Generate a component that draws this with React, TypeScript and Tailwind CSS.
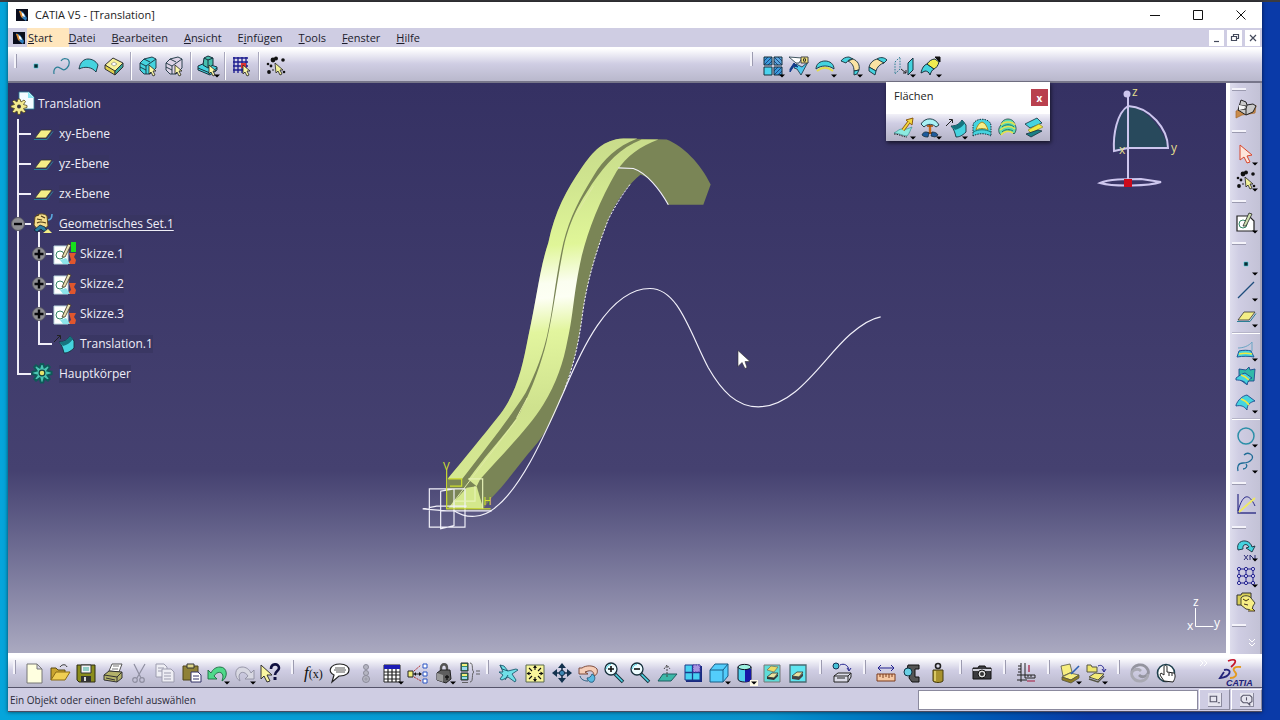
import type { ReactNode } from "react"
import { clsx } from "clsx"

const DARK = "#16303c"
const CYAN = "#45d3df"
const YEL = "#f4ee86"

const pick = <path d="M13 11l0 9 2-2 2 4 2-1-2-4 3 0z" fill="#fbf8a8" stroke="#222" strokeWidth=".8" />
const drop = <path d="M18 20.5h6l-3 3z" fill="#000" />

const lens = (
  <>
    <path d="M13 13l8 8" stroke={DARK} strokeWidth="3.6" />
    <path d="M13.5 13.5l7 7" stroke="#4fd8e8" strokeWidth="1.6" />
    <circle cx="9" cy="8" r="6" fill="#eefcff" stroke={DARK} strokeWidth="1.3" />
    <path d="M4.500 8a4.500 4.500 0 0 1 4.500-4.500" fill="none" stroke="#4fd8e8" />
  </>
)

const dots = (
  <>
    <g fill="#111">
      <circle cx="9" cy="6" r="2.4" />
      <circle cx="12" cy="4.5" r="2" />
      <circle cx="19" cy="6" r="1.8" />
      <circle cx="4" cy="10" r="1.3" />
      <circle cx="7" cy="12" r="1.4" />
      <circle cx="5" cy="18" r="1.9" />
      <circle cx="20" cy="18" r="1.3" />
      <circle cx="9" cy="16" r=".8" />
    </g>
    <path d="M11 9l1 10 2-2 2 4 2-1-2-4 3 0z" fill="#f2f29a" stroke="#222" strokeWidth=".8" />
  </>
)

const cube = (fill: string) => (
  <>
    <path d="M4 9l4-4 8-2 4 2v9l-6 6-6 0-4-4z" fill={fill} stroke={DARK} strokeWidth=".9" />
    <path d="M4 9l6 3 10-7M10 12v8M4 13l6 3M8 5l6 3" fill="none" stroke={DARK} strokeWidth=".9" />
    {pick}
  </>
)

const gear = "M11 3l2 0 1 3 3-2 1.500 1.500-2 3 3.500 1v2l-3.500 1 2 3-1.500 1.500-3-2-1 3.500h-2l-1-3.500-3 2L5.500 15.500l2-3-3.500-1v-2l3.500-1-2-3L7 4l3 2z"

// Every drawing lives on a 24 x 24 grid
const icons: Record<string, ReactNode> = {
  point: <path d="M10 10h4v4h-4z" fill="#0b2c33" stroke={CYAN} strokeWidth=".6" />,
  spline: <path d="M4 20c-1-6 3-8 6-6s4 3 7 0 3-8 0-9-5 0-6 2" fill="none" stroke="#2a7f96" strokeWidth="1.2" />,
  surface: <path d="M3 15c1-7 5-10 9-10s8 2 10 6l-2 7c-4-5-11-6-17-3z" fill={CYAN} stroke={DARK} strokeWidth=".9" />,
  solid: (
    <>
      <path d="M3 11l8-7 10 5-8 9z" fill="#f8f29a" stroke="#333" />
      <path d="M3 11v4l10 6v-4z" fill="#e0cf4c" stroke="#333" />
      <path d="M13 17v4l8-8V9z" fill="#3aa59b" stroke="#333" />
      <path d="M9 10l3-2 3 2-3 2z" fill="#fff" stroke="#777" strokeWidth=".6" />
    </>
  ),
  bodyIn: cube(CYAN),
  bodyOut: cube("#dcd3e6"),
  bodyAll: (
    <>
      <path d="M2 12l7-3 12 4v3l-7 5-12-5z" fill={CYAN} stroke={DARK} />
      <path d="M2 14l12 5 7-5" fill="none" stroke={DARK} />
      <path d="M8 4l4-2 5 2v7l-5 3-5-3z" fill="#46bfae" stroke={DARK} />
      <path d="M8 4l4 2 5-2M12 6v7" fill="none" stroke={DARK} />
      {pick}
    </>
  ),
  grid: (
    <>
      <path d="M4 3v16M8 3v16M12 3v16M16 3v12M3 4h15M3 8h15M3 12h15M3 16h10" fill="none" stroke="#1b1b8e" strokeWidth="1.3" />
      <path d="M11 9h5v5h-5z" fill="#d33" />
      {pick}
    </>
  ),
  stars: dots,
  tiles: (
    <>
      <path d="M3 3h8v8H3zM13 13h8v8h-8z" fill="#3a9bdb" />
      <path d="M13 3h8v8h-8z" fill="#5aa6dd" />
      <path d="M3 13h8v8H3z" fill="#4ad2ee" />
      <path d="M3 7l4-4M3 11l8-8M7 11l4-4M13 3l8 8M17 3l4 4M13 7l4 4M13 17l4-4M13 21l8-8M17 21l4-4" stroke="#1c3b77" strokeWidth=".9" />
      <path d="M3 3h8v8H3zM13 3h8v8h-8zM3 13h8v8H3zM13 13h8v8h-8z" fill="none" stroke={DARK} />
    </>
  ),
  trim0: (
    <>
      <path d="M2 3l13 1-3 5-3 0z" fill="#fff" stroke={DARK} strokeWidth=".8" />
      <path d="M9 10l6 3 6-5-7 13-4-6-3-1z" fill="#4fc8ee" stroke={DARK} strokeWidth=".8" />
      <path d="M7 9l4 4-4-1-4 6v-3z" fill="#123a8a" stroke="#123a8a" />
      <path d="M14 3h7v6h-7z" fill="#f3e27a" stroke="#444" />
      <ellipse cx="17.5" cy="6" rx="1" ry="1.8" fill="none" stroke="#222" />
    </>
  ),
  dome: (
    <>
      <path d="M3 15c0-5 4-8 9-8s9 3 9 8c-5-4-13-4-18 0z" fill={CYAN} stroke={DARK} strokeWidth=".9" />
      <path d="M4 17c5-4 11-4 16 0" fill="none" stroke="#e3dc4a" strokeWidth="1.8" />
    </>
  ),
  filletA: (
    <>
      <path d="M2 7c2-3 5-4 8-4l4 2c-3 0-5 1-7 4z" fill={CYAN} stroke={DARK} strokeWidth=".9" />
      <path d="M9 7l5-2c5 2 7 6 6 11l-5 1c0-5-2-8-6-10z" fill="#fae3a3" stroke={DARK} strokeWidth=".9" />
      <path d="M15 17l5-1-2 4-3 1z" fill={CYAN} stroke={DARK} strokeWidth=".9" />
    </>
  ),
  filletB: (
    <>
      <path d="M11 5c3-2 7-2 10 1l-3 3-3-1z" fill={CYAN} stroke={DARK} strokeWidth=".9" />
      <path d="M3 13c1-4 4-7 8-8l7 4c-4 1-7 4-8 8z" fill="#fae3a3" stroke={DARK} strokeWidth=".9" />
      <path d="M3 13l7 4-1 4-6-4z" fill={CYAN} stroke={DARK} strokeWidth=".9" />
    </>
  ),
  mirror: (
    <>
      <path d="M3 8l5-5v12l-5 5z" fill="none" stroke="#2d7f92" strokeDasharray="1.5 1.2" />
      <path d="M9 15l5 4M14 16v3h-3" fill="none" stroke="#222" />
      <path d="M16 9l5-5v12l-5 5z" fill={CYAN} stroke={DARK} />
    </>
  ),
  extend: (
    <>
      <path d="M3 19c1-5 3-8 6-9l7 5c-2 1-3 3-4 6-1-3-3-4-5-4z" fill={CYAN} stroke={DARK} />
      <path d="M9 10c2-3 5-5 8-5l4 3c-1 4-3 6-5 7z" fill="#f1ec4f" stroke={DARK} />
      <path d="M17 3h5v5z" fill="#111" stroke="#111" />
    </>
  ),
  extrude: (
    <>
      <path d="M2 17c4-2 5-4 8-4 4 1 7-1 10-2-2 3-2 6-5 9-4 0-8-3-13-3z" fill="#8ceae0" stroke="#3c8f92" strokeWidth=".7" />
      <path d="M2 18c5 0 9 3 13 3" fill="none" stroke="#222" strokeDasharray="1.5 1" />
      <path d="M11 14l6-8" stroke="#8a5a12" strokeWidth="3.4" />
      <path d="M14 4l7-2-1 7z" fill="#f6d83c" stroke="#8a5a12" />
      <path d="M11 14l6-8" stroke="#f6d83c" strokeWidth="1.8" />
    </>
  ),
  revolve: (
    <>
      <path d="M3 8c4-7 14-7 18 1l-3 2c-3-3-8-4-12 0z" fill="#a8f0f4" stroke={DARK} strokeWidth=".9" />
      <path d="M12 9v9" stroke="#c86a16" strokeWidth="2.4" />
      <path d="M9 10h6M9 17h6" stroke="#a04a08" strokeWidth="1.4" />
      <path d="M4 19c1-3 4-4 7-2l-1 4c-2 0-4 0-6-2zM14 16c3 0 5 1 6 3l-3 2-4-1z" fill="#1d5a9c" stroke={DARK} strokeWidth=".8" />
    </>
  ),
  translate: (
    <>
      <path d="M7 10c4 0 8-1 11-6l4 5v7c-4 4-7 5-10 5-1-4-2-8-5-11z" fill={CYAN} stroke={DARK} strokeWidth=".9" />
      <path d="M7 10c4 0 8-1 11-6l3 3c-3 4-6 6-10 7z" fill="#16747f" />
      <path d="M2 10l6-6M5 3.5h3.5V7" fill="none" stroke="#222" />
    </>
  ),
  fill: (
    <>
      <path d="M3 20V10c0-9 18-9 18 0v10c-5-3-13-3-18 0z" fill={CYAN} stroke={DARK} strokeDasharray="1.5 1" />
      <path d="M6 14c1-4 3-7 6-8 3 1 5 4 6 8-4-2-8-2-12 0z" fill="#f8ee86" stroke="#a88e22" />
      <path d="M3 16c6-3 12-3 18 0" fill="none" stroke="#1c7777" />
    </>
  ),
  blend: (
    <>
      <path d="M5 9c1-8 13-8 14 0 2 3 1 7-1 9-3-4-9-4-13 1-3-2-3-7 0-10z" fill="#5fdcae" stroke="#244" strokeWidth=".8" />
      <path d="M5 9c3-4 11-4 14 0M4 14c4-4 11-5 15-1M5 19c3-4 8-5 12-2" fill="none" stroke="#e8e24d" strokeWidth="1.6" />
      <path d="M6 11c3-3 9-3 12 0M6 16c3-3 8-3 11-1" fill="none" stroke="#1c7777" />
    </>
  ),
  offset: (
    <>
      <path d="M3 8l12-6 5 5-12 5z" fill={CYAN} stroke={DARK} strokeWidth=".8" />
      <path d="M6 14l11-6 4 3-12 6z" fill="#efe93f" stroke="#9a9634" strokeWidth=".8" />
      <path d="M4 18l12-4 4 1-11 6z" fill="#187f86" stroke={DARK} strokeWidth=".8" />
    </>
  ),
  workbench: (
    <>
      <path d="M2 15l6-2 7 2 7-6-1 8-6 1-7 1-6 3z" fill="#c98b4a" stroke="#a3682e" strokeWidth=".7" />
      <path d="M7 4l5 2 1 3 6-1 3 2-3 6-7 3-8-5z" fill="#c9c9c9" stroke="#222" />
      <path d="M4 14l8-1 1-4M12 13v6M5 9l7 1" fill="none" stroke="#222" />
      <path d="M5 9l6 1-1 3-5 1z" fill="#f4f4f4" />
    </>
  ),
  arrow: <path d="M6 3l0 15 4-3 3 6 3-1-3-6 5-1z" fill="#fde5db" stroke="#d8462c" />,
  sketch: (
    <>
      <path d="M3 6h12l5 5v10H3z" fill="#fff" stroke="#222" strokeWidth="1.2" />
      <circle cx="9" cy="14" r="4" fill="none" stroke="#386" />
      <path d="M9 16l6-13 3 1-6 12z" fill="#cfe0b0" stroke="#222" strokeWidth=".8" />
    </>
  ),
  line: <path d="M4 20L20 4" stroke="#1d4d7c" strokeWidth="1.3" />,
  plane: (
    <>
      <path d="M4 16l6-8h11l-6 8z" fill={YEL} stroke="#333" strokeWidth=".8" />
      <path d="M3 17.500h13l6-8" fill="none" stroke="#2a7f96" />
    </>
  ),
  join: (
    <>
      <path d="M4 10c5 0 11-2 14-6v9H5" fill="none" stroke="#6aa5c4" />
      <path d="M5 13c4-1 9-1 12 0l3 6c-5-1-11-1-17 0z" fill={CYAN} stroke="#1f5b96" />
      <path d="M5 16c4-1 9-1 13 0" fill="none" stroke="#efe93f" strokeWidth="1.6" />
    </>
  ),
  patch: (
    <>
      <path d="M5 5l7 1 3-3 1 3 5-1-1 12-5 0-3 3-7-5z" fill="#2fb9a9" stroke="#1e4a8e" strokeWidth=".9" />
      <path d="M2 14c3-2 5-4 9-5l7 5c-3 1-4 3-5 7-2-4-6-5-11-5z" fill={CYAN} stroke="#1e4a8e" strokeWidth=".9" />
      <path d="M7 11c4 1 6 3 8 5" stroke="#efe93f" strokeWidth="1.6" fill="none" />
    </>
  ),
  split: (
    <>
      <path d="M2 15c2-5 6-9 11-10l8 6c-5 1-8 4-8 9-3-4-6-5-11-4z" fill={CYAN} stroke="#1e4a8e" strokeWidth=".9" />
      <path d="M7 9c3 1 6 3 8 6" stroke="#efe93f" strokeWidth="1.6" fill="none" />
    </>
  ),
  circle: <circle cx="12" cy="12" r="8" fill="none" stroke="#2c8fa8" strokeWidth="1.5" />,
  curve2: <path d="M10 5c4-4 10 0 8 4-2 3-5 4-9 4-5 0-6 4-5 8M12 14c2 2 0 5-3 5" fill="none" stroke="#1f6c96" strokeWidth="1.3" />,
  law: (
    <>
      <path d="M4 2v19h18" fill="none" stroke="#3a3a8c" strokeWidth="1.3" />
      <path d="M4 19C9 1 15 1 21 14" fill="none" stroke="#2a2a8a" />
      <path d="M5 20L21 6" stroke="#f0ea60" strokeWidth="1.8" />
    </>
  ),
  repeat: (
    <>
      <path d="M4 12C1 1 16 0 18 9l3-1-3 6-6-4 3-1c-2-4-7-3-6 2z" fill={CYAN} stroke={DARK} strokeWidth=".9" />
      <path d="M10 17l4 5M14 17l-4 5M16 22v-5l5 5v-5" fill="none" stroke="#2d2d78" />
    </>
  ),
  nodes: (
    <g fill="#dcd8f4" stroke="#23238f">
      <path d="M5 5h14v14H5zM12 5v14M5 12h14" fill="none" />
      {[5, 12, 19].map((y) => [5, 12, 19].map((x) => <circle key={`${x}-${y}`} cx={x} cy={y} r="1.600" />))}
    </g>
  ),
  set: (
    <>
      <path d="M3 5h4l1-2h9v12H3z" fill="#d8cf58" stroke="#333" />
      <path d="M7 8c2-3 8-3 10 0l4 5-2 3-1 4-6-1-5-4z" fill="#f7ee86" stroke="#443" />
      <path d="M9 9l3 2 3-2M10 14l4 1M14 21h7l-3-3" fill="#f0e850" stroke="#432" />
    </>
  ),
  file: <path d="M5 3h10l5 5v14H5zM15 3v5h5" fill="#ffffe0" stroke="#777" />,
  open: (
    <>
      <path d="M3 19V7h5l2 2h7v3" fill="#c9a42f" stroke="#5b4a12" />
      <path d="M3 19l5-8h14l-5 8z" fill="#f0ce52" stroke="#8a6a14" />
      <path d="M12 6c2-3 6-3 7 0" fill="none" stroke="#333" />
    </>
  ),
  save: (
    <>
      <path d="M3 4h18v17H5l-2-2z" fill="#8b8d1c" stroke="#2a2a12" />
      <path d="M7 4h10v8H7z" fill="#f2f2f2" stroke="#333" />
      <path d="M9 7h6M9 9h6" stroke="#3a9" />
      <path d="M7 15h10v6H7z" fill="#333" />
      <path d="M10 16h2v4h-2z" fill="#ddd" />
    </>
  ),
  print: (
    <>
      <path d="M8 10l3-7h10l-3 8z" fill="#fff" stroke="#555" />
      <path d="M12 5h6M11 8h6" stroke="#777" />
      <path d="M3 14l5-4 13 1v6l-5 4-13-2z" fill="#b3b26a" stroke="#333" />
      <path d="M3 14l13 2 5-5M16 16v5M5 17l9 2" fill="none" stroke="#333" />
    </>
  ),
  cut: (
    <g fill="none" stroke="#8e8ea0" strokeWidth="1.2">
      <path d="M7 3l7 14M18 3l-8 14" />
      <circle cx="8" cy="19" r="2.3" />
      <circle cx="15" cy="19" r="2.3" />
    </g>
  ),
  copy: (
    <g fill="#eeeef4" stroke="#9c9cae">
      <path d="M3 3h8l3 3v10H3zM5 7h6M5 10h6" />
      <path d="M9 8h9l3 3v10H9zM11 12h7M11 15h7M11 18h7" />
    </g>
  ),
  paste: (
    <>
      <path d="M4 5h15v14H4z" fill="#8f8137" stroke="#4e451a" />
      <path d="M8 3h7v4H8z" fill="#ddd58a" stroke="#333" />
      <path d="M12 11h7l3 3v7H12z" fill="#fff" stroke="#336" />
      <path d="M14 15h6M14 18h6" stroke="#336" />
    </>
  ),
  undo: <path d="M2 9v9h9l-3-3c3-5 9-5 9 1l-1 4c6-3 6-14-2-14-4 0-7 2-9 6z" fill="#4fd98a" stroke="#1b6b3f" strokeWidth=".9" />,
  redo: <path d="M22 9v9h-9l3-3c-3-5-9-5-9 1l1 4C2 17 2 6 10 6c4 0 7 2 9 6z" fill="#d8d8e2" stroke="#8e8ea0" strokeWidth=".9" />,
  help: (
    <>
      <path d="M3 4v14l3-3 3 6 3-1-3-6h5z" fill="#faf5a0" stroke="#333" />
      <path d="M13 8c0-6 8-6 8-1 0 3-4 3-4 7" fill="none" stroke="#101040" strokeWidth="2.6" />
      <path d="M15.5 16h3v3h-3z" fill="#101040" />
    </>
  ),
  formula: (
    <text x="2" y="17" fontSize="17" fontStyle="italic" fontFamily="Liberation Serif, serif" fill="#111">
      f
      <tspan fontSize="12" fontStyle="normal">
        (x)
      </tspan>
    </text>
  ),
  comment: (
    <>
      <path d="M12 3c12 0 12 12 0 12l-1 0-7 6 2-7C-1 11 2 3 12 3z" fill="#fff" stroke="#222" strokeWidth="1.2" />
      <path d="M7 7h10M6 9h12M8 11h9" stroke="#444" strokeWidth=".9" />
    </>
  ),
  pawn: (
    <g fill="#b5b5c2" stroke="#8c8c9a">
      <circle cx="12" cy="6" r="2.5" />
      <circle cx="12" cy="12" r="2.5" />
      <circle cx="12" cy="18" r="3.5" />
      <circle cx="12" cy="18" r="1" fill="#eee" />
    </g>
  ),
  table: (
    <>
      <path d="M4 4h16v17H4z" fill="#fff" stroke="#222" />
      <path d="M4 4h16v4H4z" fill="#1c1cb4" />
      <path d="M4 11h16M4 14h16M4 18h16M8 8v13M12 8v13M16 8v13" stroke="#222" strokeWidth="1.2" />
    </>
  ),
  relations: (
    <>
      <path d="M2 10h5v6H2z" fill="#f2ee7a" stroke="#222" />
      <path d="M7 13h8" stroke="#222" />
      <path d="M8 10l7-6M8 16l7 4" stroke="#b02a2a" strokeDasharray="2 1" />
      <path d="M10 11v4l-2-2zM13 11l3 2-3 2z" fill="#111" />
      <path d="M17 3h4v4h-4zM17 11h4v4h-4zM17 18h4v4h-4z" fill="#fff" stroke="#2b55c4" />
    </>
  ),
  lock: (
    <>
      <path d="M9 10V7c0-5 6-5 6 0v4" fill="none" stroke="#555" strokeWidth="2.400" />
      <path d="M5 12l4-3h9l1 9-5 4-9-3z" fill="#5e5e5e" stroke="#222" />
      <path d="M5 12l6 2v7l-6-2z" fill="#9a9a9a" />
      <path d="M15 14v5M13 16h4" stroke="#111" strokeWidth="1.3" />
    </>
  ),
  equiv: (
    <>
      <path d="M3 2h7v8H3zM3 12h7v7H3z" fill="#2f8f6c" stroke="#333" />
      <path d="M4 3h5v2H4zM4 13h5v2H4z" fill="#f3ec7a" />
      <path d="M4 6h5v3H4zM4 16h5v2H4z" fill="#9ad8ee" />
      <path d="M12 2c4 0 1 8 4 9-3 1 0 10-4 10M18 10h4M18 13h4M4 21.5h6" fill="none" stroke="#555" strokeWidth=".9" />
    </>
  ),
  fly: (
    <>
      <path d="M3 4l4 1 4 5 8-2 2 1-6 4 4 6-1 2-7-5-6 3-2-1 3-4-4-3 4 0z" fill="#6fe0e8" stroke="#1e5c70" strokeWidth=".9" />
      <path d="M3 4l2 4 6 2M11 14l-3 5" fill="none" stroke="#1e5c70" />
    </>
  ),
  fit: (
    <>
      <path d="M3 4h18v17H3z" fill="#f9f69a" stroke="#5a6a50" />
      <path d="M12 5v4M12 16v4M4 12.5h4M16 12.5h4M6 7l3 3M18 7l-3 3M6 18l3-3M18 18l-3-3" fill="none" stroke="#111" strokeWidth="1.1" />
      <path d="M12 4l-2 3h4zM12 21l-2-3h4zM3.5 12.5l3-2v4zM20.500 12.500l-3-2v4z" fill="#111" />
    </>
  ),
  pan: (
    <>
      <path d="M12 4v16M4 12h16" stroke="#14324e" strokeWidth="1.6" />
      <path d="M12 2l-4 5h8zM12 22l-4-5h8zM2 12l5-4v8zM22 12l-5-4v8z" fill="#14324e" />
      <circle cx="12" cy="12" r="2.6" fill="#3d86b4" stroke="#14324e" />
    </>
  ),
  rotate: (
    <>
      <path d="M3 7h3c4-3 12-3 15 1 1 3 0 6-3 7 0-4-2-6-6-5l-3 1 3 2-7 0-2 0z" fill="#f5cdb8" stroke="#73402f" strokeWidth=".9" />
      <path d="M11 17c2 0 4-1 5-4 3 1 4 5 1 8-3 1-5-1-6-4z" fill="#59b9e0" stroke="#245b7d" strokeWidth=".9" />
      <path d="M4 15c1 4 5 5 8 5" fill="none" stroke="#245b7d" />
    </>
  ),
  zoomIn: (
    <>
      {lens}
      <path d="M6 8h6M9 5v6" stroke="#111" strokeWidth="1.6" />
    </>
  ),
  zoomOut: (
    <>
      {lens}
      <path d="M6 8h6" stroke="#111" strokeWidth="1.6" />
    </>
  ),
  normal: (
    <>
      <path d="M3 20l5-7h14l-6 7z" fill="#3cb8a8" stroke="#1e5c60" />
      <path d="M12 16V5M9 8l3-4 3 4" fill="none" stroke="#444" strokeDasharray="2 1" />
    </>
  ),
  multi: (
    <>
      <path d="M5 5h16v16H5z" fill="#1a2a80" />
      <path d="M4 4h15v15H4z" fill="#48d2f2" stroke="#1a3a8a" />
      <path d="M11.5 4v15M4 11.5h15" stroke="#1a3a8a" strokeWidth="1.3" />
      <path d="M12 4h7v7h-7z" fill="#a895e0" stroke="#5033a8" strokeDasharray="1.5 1" />
    </>
  ),
  iso: (
    <>
      <path d="M3 9l5-6h13v12l-5 6H3z" fill="#53cdfb" stroke="#185d86" />
      <path d="M3 9h13v12M16 9l5-6" fill="none" stroke="#185d86" />
    </>
  ),
  shading: (
    <>
      <path d="M5 6v12c0 4 13 4 13 0V6z" fill="#4fd0ee" stroke="#112" />
      <path d="M12 8h6v10c0 2-3 3-6 3z" fill="#1717a8" />
      <ellipse cx="11.5" cy="6" rx="6.5" ry="2.6" fill="#9cf0e0" stroke="#112" />
      <path d="M17 19h8v6h-8z" fill="#fffbe8" />
    </>
  ),
  showHide: (
    <>
      <path d="M4 4h16v17H4z" fill="#5fdcd8" stroke="#777" />
      <path d="M7 9l4-4 7 1-4 5z" fill="#e9dc66" stroke="#776" strokeWidth=".8" />
      <path d="M7 16l5-4h6l-4 5z" fill="#e8e2a0" stroke="#333" strokeWidth=".8" />
      <path d="M7 16l7 1 4-4v2l-4 4-7-1z" fill="#333" />
    </>
  ),
  swap: (
    <>
      <path d="M4 4h16v17H4z" fill="#5fe6f0" stroke="#4a6a70" strokeWidth="1.3" />
      <path d="M6 15l5-4h6l-4 5z" fill="#e8e2a0" stroke="#333" strokeWidth=".8" />
      <path d="M6 15l7 1 4-4v3l-4 4-7-1z" fill="#444" />
    </>
  ),
  turntable: (
    <>
      <circle cx="6" cy="5" r="3" fill="#46c2d6" stroke="#135" />
      <path d="M10 4c4-2 8 0 9 5M17 7l2 3 2-3" fill="none" stroke="#23238f" />
      <path d="M4 15l4-3h13v4l-3 5H4zM4 15h14v6M18 15l3-3M7 17h8" fill="#dcdce8" stroke="#222" />
    </>
  ),
  measure: (
    <>
      <path d="M4 7h16M7 4L4 7l3 3M17 4l3 3-3 3" fill="none" stroke="#23238f" />
      <path d="M3 13h18v7H3z" fill="#f6c9a4" stroke="#7a3b1d" />
      <path d="M6 13v3M9 13v4M12 13v3M15 13v4M18 13v3" stroke="#7a3b1d" />
    </>
  ),
  clamp: (
    <>
      <path d="M8 4h11v4h-4v8h4v5h-7l-3-4 2-9H7z" fill="#555" stroke="#111" />
      <circle cx="8" cy="11" r="4" fill="#69cfe4" stroke="#134" />
    </>
  ),
  weight: (
    <>
      <circle cx="12" cy="5" r="2.5" fill="none" stroke="#222" strokeWidth="1.6" />
      <path d="M7 9h10v11c-2 2-8 2-10 0z" fill="#a8922e" stroke="#443a0e" />
      <path d="M9 10v10" stroke="#d9c865" strokeWidth="2" />
    </>
  ),
  camera: (
    <>
      <path d="M3 7h5l1-2h6l1 2h5v11H3z" fill="#3a3a3e" stroke="#111" />
      <path d="M3 8h18v2H3z" fill="#cfcfd8" />
      <circle cx="12" cy="13" r="4" fill="#ddd" stroke="#111" />
      <circle cx="12" cy="13" r="2" fill="#333" />
    </>
  ),
  ruler: (
    <>
      <path d="M7 2v19M11 2v12M3 14h18M3 19h10M4 5h3M4 8h3M4 11h3" stroke="#222" />
      <path d="M15 4v7M13 20h8" stroke="#a3163a" strokeWidth="1.2" />
      <path d="M11 14v3h10v-3M14 14v2M17 14v2" fill="none" stroke="#222" />
    </>
  ),
  catalog: (
    <>
      <path d="M3 5l9-2 2 8-9 4z" fill="#f7ee80" stroke="#554" strokeWidth=".8" />
      <path d="M4 16l8-4 9 2-8 5z" fill="#f7ee80" stroke="#554" strokeWidth=".8" />
      <path d="M4 16v3l9 3 8-5v-3l-8 5z" fill="#8f7d24" stroke="#554" strokeWidth=".8" />
      <path d="M21 5l-8 8" stroke="#2c5fb0" strokeWidth="1.6" />
    </>
  ),
  catalogOpen: (
    <>
      <path d="M3 4h4l1 2h5v5H3z" fill="#efe66e" stroke="#554" />
      <path d="M14 5c4-2 6 1 6 5M18 8l2 3 2-3" fill="none" stroke="#23238f" />
      <path d="M5 16l6-4 9 1-6 6z" fill="#f3e978" stroke="#554" />
      <path d="M5 18l9 3 6-6" fill="none" stroke="#554" strokeWidth="1.5" />
    </>
  ),
  update: (
    <g fill="none" strokeWidth="2.800">
      <path d="M4 11C4 3 16 1 20 9c2 5-5 9-9 5" stroke="#94949f" />
      <path d="M20 13c0 8-12 10-16 2-2-5 5-9 9-5" stroke="#a9a9b3" />
    </g>
  ),
  hand: (
    <>
      <circle cx="12" cy="12" r="8.5" fill="#fff" stroke="#1d3f4c" strokeWidth="1.6" />
      <path d="M10 20l-4-6 1-2 3 2V6c0-2 3-2 3 0v5l7 1c2 2 1 6-1 9z" fill="#fff" stroke="#222" />
      <path d="M15 12v3M18 12v3" stroke="#222" />
    </>
  ),
  part: (
    <>
      <path d="M9 0h10l5 5v12H9z" fill="#f4fbff" stroke="#2a7f96" strokeWidth=".8" />
      <path d="M18 0l6 6h-6z" fill="#8ce6f2" />
      <g transform="translate(-3 4)">
        <path d={gear} fill="#f2e98e" stroke="#554a1e" strokeWidth=".8" />
        <circle cx="12" cy="10.5" r="2" fill="#39343f" />
      </g>
    </>
  ),
  geoSet: (
    <>
      <path d="M8 20v9" stroke="#f0eef8" strokeWidth="2" />
      <path d="M4 5c3-4 9-4 12-1l1 10-4 3-7 0-3-4z" fill="#f4dc8c" stroke="#604c20" />
      <path d="M6 7l5 1M10 4l4 2M6 11c3-2 6-1 9 0M5 4l3-1" fill="none" stroke="#4c3a14" strokeWidth="1.2" />
      <path d="M3 18l6-5 5 2 2 4-4 0-2-2-4 3z" fill="#2a7ea0" stroke="#123" strokeWidth=".8" />
      <path d="M12 21h9l-4-4z" fill={YEL} />
      <path d="M17 8c3 0 4-2 4-6" fill="none" stroke="#5aa9de" strokeWidth="1.6" />
    </>
  ),
  sketchNode: (
    <>
      <path d="M2 4h14v18H2z" fill="#fff" stroke="#bcd8df" />
      <path d="M17 11h7l-2 4 2 3-1 4h-8l4-4z" fill="#e0562d" />
      <path d="M8 18l6-2 4 6h-7z" fill="#8be4ea" />
      <circle cx="8" cy="13" r="4" fill="none" stroke="#386" />
      <path d="M10 15l6-13 3 1-6 12z" fill="#e6e0b0" stroke="#432" strokeWidth=".8" />
    </>
  ),
  body: (
    <>
      <g transform="translate(-3.4 -1.600) scale(1.200)">
        <path d={gear} fill="#4cc7b4" stroke="#0f5a58" strokeWidth="1.6" />
        <circle cx="12" cy="10.500" r="2.400" fill="#e8e26b" stroke="#123f3d" />
      </g>
    </>
  ),
}

function Glyph({ name, menu = false }: { name: string; menu?: boolean }) {
  return (
    <svg viewBox="0 0 24 24" className="size-6 shrink-0 overflow-visible" aria-hidden="true">
      {icons[name]}
      {menu && drop}
    </svg>
  )
}

// [icon, label, has flyout]
type Tool = [string, string, boolean?]

function ToolButton({ tool }: { tool: Tool }) {
  return (
    <button type="button" aria-label={tool[1]} title={tool[1]} className="flex size-[26px] shrink-0 items-center justify-center">
      <Glyph name={tool[0]} menu={tool[2]} />
    </button>
  )
}

function Tools({ tools, className }: { tools: Tool[]; className?: string }) {
  return (
    <div className={clsx("flex shrink-0 items-center justify-between", className)}>
      {tools.map((tool) => (
        <ToolButton key={tool[1]} tool={tool} />
      ))}
    </div>
  )
}

function Grip({ className = "w-[18px]" }: { className?: string }) {
  return (
    <div className={clsx("flex shrink-0 justify-center self-start pt-[2px]", className)}>
      <div className="h-[14px] w-[3px] border-r border-[#9c9bb0] bg-[#f4f3fa]" />
    </div>
  )
}

function SideGrip({ className }: { className: string }) {
  return (
    <div className={clsx("flex w-full shrink-0 items-center", className)}>
      <div className="h-[3px] w-[14px] border-b border-[#9c9bb0] bg-[#f4f3fa]" />
    </div>
  )
}

const Divider = () => <div className="mx-[3px] h-[28px] w-[2px] shrink-0 border-r border-white bg-[#a9a8bd]" />
const SideDivider = () => <div className="my-[3px] h-[2px] w-full shrink-0 border-b border-white bg-[#b5b4c8]" />

const menus = ["Datei", "Bearbeiten", "Ansicht", "Einfügen", "Tools", "Fenster", "Hilfe"]

const barBottom: { tools: Tool[]; className?: string }[] = [
  {
    className: "w-[262px]",
    tools: [
      ["file", "Neu"],
      ["open", "Öffnen"],
      ["save", "Sichern"],
      ["print", "Drucken"],
      ["cut", "Ausschneiden"],
      ["copy", "Kopieren"],
      ["paste", "Einfügen"],
      ["undo", "Widerrufen", true],
      ["redo", "Wiederherstellen", true],
      ["help", "Direkthilfe"],
    ],
  },
  {
    className: "w-[177px]",
    tools: [
      ["formula", "Formel"],
      ["comment", "Kommentar"],
      ["pawn", "Regel"],
      ["table", "Konstruktionstabelle", true],
      ["relations", "Beziehungen"],
      ["lock", "Sperren", true],
      ["equiv", "Äquivalente Dimensionen"],
    ],
  },
  {
    className: "w-[315px]",
    tools: [
      ["fly", "Flugmodus"],
      ["fit", "Alles einpassen"],
      ["pan", "Schwenken"],
      ["rotate", "Drehen"],
      ["zoomIn", "Vergrößern"],
      ["zoomOut", "Verkleinern"],
      ["normal", "Senkrechte Ansicht"],
      ["multi", "Mehrfachansicht"],
      ["iso", "Isometrische Ansicht", true],
      ["shading", "Schattierung", true],
      ["showHide", "Verdecken/Anzeigen"],
      ["swap", "Sichtbaren Raum umschalten"],
    ],
  },
  { tools: [["turntable", "Drehtisch"]] },
  {
    tools: [
      ["measure", "Messen zwischen"],
      ["clamp", "Element messen"],
      ["weight", "Trägheit messen"],
    ],
  },
  { tools: [["camera", "Aufnehmen"]] },
  { tools: [["ruler", "Bemaßung"]] },
  {
    tools: [
      ["catalog", "Material zuordnen", true],
      ["catalogOpen", "Katalog", true],
    ],
  },
  {
    tools: [
      ["update", "Aktualisieren"],
      ["hand", "Manuelle Aktualisierung"],
    ],
  },
]

const palette: Tool[] = [
  ["extrude", "Extrudieren", true],
  ["revolve", "Rotation", true],
  ["translate", "Translation", true],
  ["fill", "Füllen"],
  ["blend", "Übergang"],
  ["offset", "Offset"],
]

// branch: lines left of the icon, one cell per level
type Branch = "pass" | "tee" | "end" | "plus" | "minus"
type TreeNode = { label: string; icon: string; branch: Branch[]; lit?: boolean }

const tree: TreeNode[] = [
  { label: "Translation", icon: "part", branch: [] },
  { label: "xy-Ebene", icon: "plane", branch: ["tee"] },
  { label: "yz-Ebene", icon: "plane", branch: ["tee"] },
  { label: "zx-Ebene", icon: "plane", branch: ["tee"] },
  { label: "Geometrisches Set.1", icon: "geoSet", branch: ["minus"] },
  { label: "Skizze.1", icon: "sketchNode", branch: ["pass", "plus"], lit: true },
  { label: "Skizze.2", icon: "sketchNode", branch: ["pass", "plus"] },
  { label: "Skizze.3", icon: "sketchNode", branch: ["pass", "plus"] },
  { label: "Translation.1", icon: "translate", branch: ["pass", "end"] },
  { label: "Hauptkörper", icon: "body", branch: ["end"] },
]

function BranchCell({ kind }: { kind: Branch }) {
  return (
    <svg viewBox="0 0 21 30" className="h-[30px] w-[21px] shrink-0 overflow-visible" aria-hidden="true">
      <path d={kind === "end" ? "M10 0v15" : "M10 0v30"} stroke="#f0eef8" strokeWidth="2" />
      {kind !== "pass" && <path d="M9 15h14" stroke="#f0eef8" strokeWidth="2" />}
      {(kind === "plus" || kind === "minus") && (
        <>
          <circle cx="10" cy="15" r="6.5" fill="#8e8e92" stroke="#5c5c66" />
          <path d={kind === "plus" ? "M5.5 15h9M10 10.5v9" : "M6 15h8"} stroke="#08080c" strokeWidth="2.4" />
        </>
      )}
    </svg>
  )
}

function SpecTree() {
  return (
    <ul className="relative w-fit pt-[6px] text-[12px] leading-[18px] text-[#efedf8]">
      {tree.map((node) => (
        <li key={node.label} className="flex h-[30px] items-center">
          {node.branch.map((kind, i) => (
            <BranchCell key={i} kind={kind} />
          ))}
          <span className="relative ml-[2px] flex">
            <Glyph name={node.icon} />
            {node.lit && <span className="absolute top-0 right-0 h-[10px] w-[5px] bg-[#16e01c]" />}
          </span>
          <span className={clsx("ml-1", node.icon === "geoSet" && "underline underline-offset-2", node.branch.length > 0 && "bg-[#38355f]/70")}>
            {node.label}
          </span>
        </li>
      ))}
    </ul>
  )
}

function Model() {
  return (
    <svg viewBox="8 83 1218 571" preserveAspectRatio="xMidYMid slice" className="absolute inset-0 size-full" aria-hidden="true">
      <defs>
        <linearGradient id="sheen" gradientUnits="userSpaceOnUse" x1="0" y1="57" x2="90" y2="1168">
          <stop offset="0" stopColor="#c6d889" />
          <stop offset=".15" stopColor="#cfe48f" />
          <stop offset=".32" stopColor="#e0f698" />
          <stop offset=".42" stopColor="#fbfef0" />
          <stop offset=".46" stopColor="#fdfff4" />
          <stop offset=".55" stopColor="#e2f59e" />
          <stop offset=".75" stopColor="#cfe28e" />
          <stop offset="1" stopColor="#d8ea94" />
        </linearGradient>
      </defs>
      <g transform="translate(400 120) scale(.33333)">
        <path
          d="M143 1078C200 1010 240 960 300 885C350 820 368 740 385 650C410 540 418 450 445 370C465 275 500 210 545 145C580 95 610 60 670 57L800 60C850 80 900 130 932 195L910 256L805 256C780 210 760 180 722 165C690 190 650 240 625 300C590 390 562 480 548 580C535 680 520 740 490 820C460 900 435 945 400 985C360 1030 320 1090 275 1135L250 1168H140Z"
          fill="#7a8556"
        />
        <path
          d="M143 1078C200 1010 240 960 300 885C350 820 368 740 385 650C410 540 418 450 445 370C465 275 500 210 545 145C580 95 610 60 670 57L712 57C650 80 610 120 580 170C540 235 510 290 490 370C467 470 460 560 447 620C432 700 407 760 377 820C330 895 270 970 187 1078Z"
          fill="url(#sheen)"
        />
        <path
          d="M775 60C720 80 680 110 650 155C600 240 565 330 545 410C520 520 520 590 503 660C490 730 470 790 430 855C390 920 330 980 240 1080L230 1100L205 1080C270 990 330 930 360 880C400 800 424 730 439 670C464 560 474 460 494 370C515 290 540 250 575 195C620 130 660 85 725 60Z"
          fill="url(#sheen)"
        />
        <path d="M155 1155L350 900M350 895L382 835M528 285L580 200" stroke="#dfeaa6" strokeWidth="3" />
        <path d="M145 1165L200 1105L230 1100L250 1168Z" fill="#d4e88c" />
        <g fill="none" stroke="#f2f1fa" strokeWidth="3.5">
          <path d="M655 145L700 147C740 160 780 210 805 256" />
          <path d="M690 195C660 235 640 270 625 300C590 390 562 480 548 580C535 680 520 740 490 820" strokeDasharray="7 4" strokeWidth="3" />
          <path d="M160 1172C200 1200 250 1195 285 1165C370 1100 440 930 490 820C540 700 625 507 750 507C835 507 870 640 925 745C965 815 1010 862 1075 862C1190 862 1270 715 1350 645C1390 610 1420 596 1442 592" />
          <path d="M88 1108H195V1223H88ZM122 1115L162 1108V1218L122 1228ZM68 1168L110 1160H200M68 1168L140 1174H275" />
          <path d="M205 1078H248V1168M225 1100V1145H160" stroke="#e8f3b8" />
        </g>
        <path d="M140 1050V1168H272M145 1078H185V1100H150" fill="none" stroke="#cfe02e" strokeWidth="3.5" />
        <g fill="#d6e02c" fontFamily="Open Sans, sans-serif" fontSize="34">
          <text x="129" y="1052">
            V
          </text>
          <text x="250" y="1158">
            H
          </text>
        </g>
      </g>
      <path d="M738 351v16l4-4 3 6 2-1-2-6h5z" fill="#fff" stroke="#333" strokeWidth=".6" />
    </svg>
  )
}

function Compass() {
  return (
    <svg viewBox="0 -6 84 110" className="absolute -top-[2px] right-[45px] h-[110px] w-[84px]" aria-hidden="true">
      <path d="M31 19C48 20 67 42 71 61L31 62Z" fill="#28495c" />
      <path d="M31 19C22 25 16 50 18 65L31 61Z" fill="#2b4761" />
      <g fill="none" stroke="#cdc6ee" strokeWidth="2">
        <path d="M31 19C53 20 71 42 71 61H31L17 64C16 47 20 26 31 19Z" />
        <path d="M31 8V94" />
        <path d="M3 96C12 92 28 92 44 92L64 95C52 99 18 100 3 96Z" />
      </g>
      <circle cx="30" cy="7" r="3.5" fill="#cdc6ee" />
      <path d="M27 92h8v8h-8z" fill="#cc0a1c" />
      <g fill="#e3de8d" fontFamily="Open Sans, sans-serif" fontSize="12">
        <text x="35" y="9">
          z
        </text>
        <text x="74" y="65">
          y
        </text>
        <text x="22" y="67">
          x
        </text>
      </g>
    </svg>
  )
}

function Triad() {
  return (
    <svg viewBox="0 -8 36 48" className="absolute right-[4px] bottom-[14px] h-[48px] w-[36px]" aria-hidden="true">
      <path d="M9.5 9v18.500h18" fill="none" stroke="#fff" />
      <g fill="#fff" fontFamily="Open Sans, sans-serif" fontSize="12">
        <text x="7" y="7">
          z
        </text>
        <text x="28" y="28">
          y
        </text>
        <text x="1" y="31">
          x
        </text>
      </g>
    </svg>
  )
}

function SurfacePalette() {
  return (
    <section className="absolute -top-px right-[176px] w-[164px] shadow-[1px_2px_4px_rgba(0,0,0,0.6)]">
      <header className="flex h-[32px] items-start justify-between bg-white pt-[7px] pr-[2px] pl-2">
        <h2 className="text-[11px] leading-[14px] text-[#222]">Flächen</h2>
        <button type="button" aria-label="Schließen" className="flex size-[17px] items-center justify-center bg-[#b9404e] text-[10px] leading-4 font-bold text-white">
          x
        </button>
      </header>
      <Tools tools={palette} className="h-[27px] bg-linear-to-b from-[#f2f1f8] via-[#cfcde3] via-35% to-[#b4b3c6] px-[5px]" />
    </section>
  )
}

function AppMark() {
  return (
    <svg viewBox="0 0 14 14" className="size-[14px] shrink-0" aria-hidden="true">
      <path d="M1 1h12v12H1z" fill="#0a0d1c" />
      <path d="M4 2l4 2 4 6-1 3-4-3z" fill="#2f7fc0" />
      <path d="M6 4l3 2 1 3-3-1z" fill="#fff" />
      <path d="M4 3l2 0 2 7-2-1z" fill="#e08a2e" />
    </svg>
  )
}

function CatiaLogo() {
  return (
    <svg viewBox="0 0 42 32" className="h-8 w-[42px] shrink-0" aria-hidden="true">
      <path d="M12 4c8-3 10 0 3 6" fill="none" stroke="#c4162a" strokeWidth="1.8" />
      <path d="M8 13c9-2 7 7-4 8l4-6" fill="none" stroke="#23237a" strokeWidth="1.8" />
      <path d="M25 10c-7-1-9 2-6 5s0 6-5 6" fill="none" stroke="#e39a1e" strokeWidth="1.8" />
      <text x="10" y="29" fontSize="9" fontWeight="bold" fontStyle="italic" fontFamily="Liberation Sans, sans-serif" fill="#23237a">
        CATIA
      </text>
    </svg>
  )
}

function TitleBar() {
  return (
    <header className="flex h-[26px] shrink-0 items-center bg-white pl-[7px]">
      <AppMark />
      <h1 className="ml-[6px] flex-1 text-[11px] leading-4 text-[#222]">CATIA V5 - [Translation]</h1>
      <div className="flex text-[#111]">
        {[
          ["Minimieren", "M0 5.5h10"],
          ["Maximieren", "M.5.5h9v9h-9z"],
          ["Schließen", "M.5.5l9 9M9.5.5l-9 9"],
        ].map(([label, d]) => (
          <button key={label} type="button" aria-label={label} className="flex h-[26px] w-[43px] items-center justify-center">
            <svg viewBox="0 0 10 10" className="size-[10px]" fill="none" stroke="currentColor">
              <path d={d} />
            </svg>
          </button>
        ))}
      </div>
    </header>
  )
}

function MenuBar() {
  return (
    <nav className="flex h-[19px] shrink-0 items-center bg-[#cfcde3] pr-[2px] pl-1 text-[11px] leading-4 text-[#1c1c2c]">
      <AppMark />
      <button type="button" className="ml-px h-[19px] bg-[#ffe6bd] pr-4 pl-px">
        <u>S</u>tart
      </button>
      <div className="flex flex-1 gap-4">
        {menus.map((m) => {
          // "Einfügen" takes its second letter as the access key
          const at = m === "Einfügen" ? 1 : 0
          return (
            <button key={m} type="button">
              {m.slice(0, at)}
              <u>{m[at]}</u>
              {m.slice(at + 1)}
            </button>
          )
        })}
      </div>
      {[
        ["Fenster minimieren", "M2 8.500h5"],
        ["Fenster wiederherstellen", "M3.5 3.5v-2h5v4h-2M1.5 3.5h5v4h-5z"],
        ["Fenster schließen", "M2 2l6 6M8 2l-6 6"],
      ].map(([label, d]) => (
        <button key={label} type="button" aria-label={label} className="ml-[3px] flex h-4 w-[15px] items-center justify-center bg-white">
          <svg viewBox="0 0 10 10" className="size-[10px]" fill="none" stroke="#444a5c" strokeWidth="1.2">
            <path d={d} />
          </svg>
        </button>
      ))}
    </nav>
  )
}

function TopBar() {
  return (
    <div role="toolbar" aria-label="Auswahlfilter" className="flex h-9 shrink-0 items-center border-b-2 border-[#77768a] bg-linear-to-b from-white from-5% via-[#cfcde3] via-50% to-[#b9b8cc] pt-[3px]">
      <div className="flex w-[734px] items-center">
        <Grip className="w-[15px]" />
        <Tools tools={[["point", "Punkt"], ["spline", "Kurve"], ["surface", "Fläche"], ["solid", "Volumenkörper"]]} />
        <Divider />
        <Tools tools={[["bodyIn", "Körper"], ["bodyOut", "Geometrisches Set"]]} />
        <Divider />
        <Tools tools={[["bodyAll", "Komponente", true]]} />
        <Divider />
        <Tools tools={[["grid", "Auf Raster auswählen"]]} />
        <Divider />
        <Tools tools={[["stars", "Schnellauswahl"]]} />
      </div>
      <Grip />
      <Tools
        className="w-[183px]"
        tools={[
          ["tiles", "Zusammenfügen", true],
          ["trim0", "Trennen", true],
          ["dome", "Begrenzung", true],
          ["filletA", "Kurvenverrundung", true],
          ["filletB", "Flächenverrundung"],
          ["mirror", "Symmetrie", true],
          ["extend", "Extrapolieren", true],
        ]}
      />
    </div>
  )
}

function SideTools({ tools }: { tools: Tool[] }) {
  return <Tools tools={tools} className="w-full flex-col" />
}

function SideBar() {
  return (
    <aside className="flex w-9 shrink-0 flex-col items-center border-r-2 border-l-4 border-l-white border-r-[#a5a4b8] bg-linear-to-r from-[#dddcec] via-[#cfcde3] via-30% to-[#c3c2d6] pl-[2px]">
      <SideGrip className="h-3" />
      <SideTools tools={[["workbench", "Umgebung"]]} />
      <SideGrip className="h-5" />
      <SideTools tools={[["arrow", "Auswählen", true], ["stars", "Mehrfachauswahl", true]]} />
      <SideGrip className="h-4" />
      <SideTools tools={[["sketch", "Skizzierer", true]]} />
      <SideGrip className="h-4" />
      <SideTools tools={[["point", "Punkt", true], ["line", "Linie", true], ["plane", "Ebene", true]]} />
      <SideDivider />
      <SideTools tools={[["join", "Profil", true], ["patch", "Flächenstück"], ["split", "Schneiden", true]]} />
      <SideDivider />
      <SideTools tools={[["circle", "Kreis", true], ["curve2", "Spline", true]]} />
      <SideGrip className="h-4" />
      <SideTools tools={[["law", "Gesetz"]]} />
      <SideGrip className="h-5" />
      <SideTools tools={[["repeat", "Objekt wiederholen", true], ["nodes", "Muster", true], ["set", "Kopie erzeugen"]]} />
      <SideGrip className="h-5" />
      <svg viewBox="0 0 8 8" className="mt-1 mr-1 size-2 self-end" fill="none" stroke="#fff" aria-hidden="true">
        <path d="M1 0l3 3 3-3M1 4l3 3 3-3" />
      </svg>
    </aside>
  )
}

function BottomBar() {
  return (
    <div className="flex h-[34px] shrink-0 items-center border-b border-[#55546a] bg-linear-to-b from-white from-10% via-[#cfcde3] via-50% to-[#b9b8cc] pt-[4px]">
      {barBottom.map((group, i) => (
        <div key={group.tools[0][0]} className="flex self-stretch">
          <Grip className={i === 0 ? "w-[13px]" : "w-[18px]"} />
          <Tools tools={group.tools} className={group.className} />
        </div>
      ))}
      <div className="flex flex-1 items-center justify-end gap-2 pr-1">
        <svg viewBox="0 0 8 8" className="mb-5 size-2" fill="none" stroke="#fff" aria-hidden="true">
          <path d="M0 1l3 3-3 3M4 1l3 3-3 3" />
        </svg>
        <CatiaLogo />
      </div>
    </div>
  )
}

function StatusBar() {
  return (
    <footer className="flex h-6 shrink-0 items-center border-b border-[#4c4b60] bg-[#cfcde3] pl-[2px] text-[#2a2a38]">
      <p className="flex-1 text-[10px] leading-4">Ein Objekt oder einen Befehl auswählen</p>
      <input aria-label="Befehlseingabe" className="h-[20px] w-[280px] border border-[#8b8a9e] bg-white px-1 text-[10px]" />
      {[
        ["Befehlsliste", "M2 3h6v5H2zM9 9h2"],
        ["Information", "M3 2h6l2 2v4l-2 1v2l-2-2H3L1 7V4zM6 4v3"],
      ].map(([label, d]) => (
        <button key={label} type="button" aria-label={label} className="ml-px flex h-[21px] w-[31px] items-center justify-center border border-t-white border-r-[#8b8a9e] border-b-[#8b8a9e] border-l-white bg-[#cfcde3]">
          <svg viewBox="0 0 12 12" className="size-[14px] border-r border-b border-[#8b8a9e] bg-[#e6e5ef]" fill="none" stroke="#555468">
            <path d={d} />
          </svg>
        </button>
      ))}
    </footer>
  )
}

export default function App() {
  return (
    <div className="flex min-h-screen flex-col border-t-2 border-[#3b3b40] bg-linear-to-r from-[#05a5db] via-[#0a93cc] via-60% to-[#0a3aa8] to-85% pr-[18px] pb-2 pl-2 font-['Open_Sans','Noto_Sans',sans-serif]">
      <div className="flex flex-1 flex-col shadow-[0_0_4px_rgba(0,0,0,0.6)]">
        <TitleBar />
        <MenuBar />
        <TopBar />
        <main className="flex flex-1">
          <div className="relative flex-1 border-b border-white bg-linear-to-b from-[#353163] from-0% via-[#454170] via-68% to-[#aaa9c0]">
            <Model />
            <SpecTree />
            <Compass />
            <Triad />
            <SurfacePalette />
          </div>
          <SideBar />
        </main>
        <BottomBar />
        <StatusBar />
      </div>
    </div>
  )
}
